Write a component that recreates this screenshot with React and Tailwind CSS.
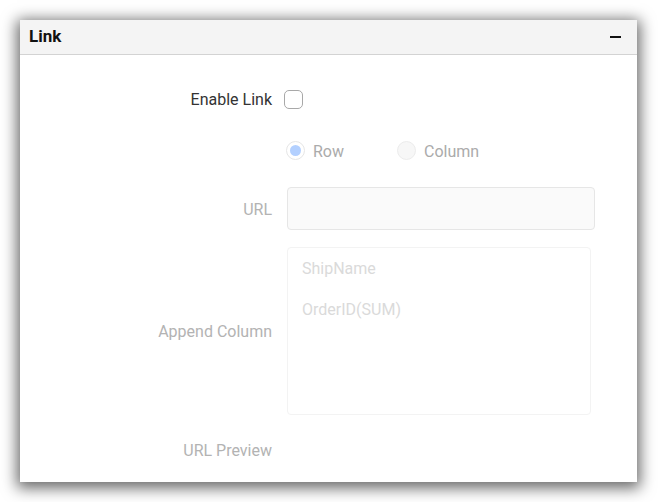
import React, { useState } from 'react';

const labelClass = 'w-[252px] shrink-0 text-right text-[16px] pt-[2px]';

const App = () => {
  const [enabled, setEnabled] = useState(false);
  const [mode, setMode] = useState('row');

  return (
    <div className="w-[658px] h-[502px] bg-white p-[20px] font-['Roboto',sans-serif]">
      <div className="w-[617px] h-[462px] bg-white flex flex-col shadow-[0_3px_14px_3px_rgba(0,0,0,0.6)]">
        {/* header */}
        <div className="h-[35px] shrink-0 flex items-center justify-between pl-[9px] pr-[16px] bg-[#f4f4f4] border-b border-[#d3d3d3]">
          <span className="text-[17px] font-bold text-[#111]">Link</span>
          <span className="block w-[11px] h-[2px] bg-[#111]"></span>
        </div>

        <div className="flex flex-col pt-[29px]">
          <div className="flex items-center h-[30px]">
            <div className={`${labelClass} text-[#333]`}>Enable Link</div>
            <div className="pl-[12px]">
              <button
                type="button"
                onClick={() => setEnabled(!enabled)}
                className="block w-[19px] h-[19px] rounded-[5px] border border-[#a8a8a8] bg-white"
              ></button>
            </div>
          </div>

          <div className="flex items-center h-[30px] mt-[21px]">
            <div className={labelClass}></div>
            <div className="pl-[14px] flex items-center">
              <label className="flex items-center cursor-default" onClick={() => setMode('row')}>
                <span className="w-[19px] h-[19px] rounded-full border border-[#e6e6e6] bg-white flex items-center justify-center">
                  {mode === 'row' && <span className="w-[11px] h-[11px] rounded-full bg-[#b3d0ff]"></span>}
                </span>
                <span className="ml-[8px] text-[16px] text-[#ababab] mt-[3px]">Row</span>
              </label>
              <label className="flex items-center ml-[53px] cursor-default" onClick={() => setMode('column')}>
                <span className="w-[19px] h-[19px] rounded-full border border-[#ececec] bg-[#f7f7f7] flex items-center justify-center">
                  {mode === 'column' && <span className="w-[11px] h-[11px] rounded-full bg-[#b3d0ff]"></span>}
                </span>
                <span className="ml-[8px] text-[16px] text-[#ababab] mt-[3px]">Column</span>
              </label>
            </div>
          </div>

          <div className="flex items-center h-[43px] mt-[22px]">
            <div className={`${labelClass} text-[#b3b3b3]`}>URL</div>
            <div className="pl-[15px]">
              <div className="w-[308px] h-[43px] rounded-[4px] border border-[#e6e6e6] bg-[#fafafa]"></div>
            </div>
          </div>

          <div className="flex items-center h-[168px] mt-[17px]">
            <div className={`${labelClass} text-[#b3b3b3]`}>Append Column</div>
            <div className="pl-[15px]">
              <div className="w-[304px] h-[168px] rounded-[4px] border border-[#f3f3f3] bg-white pl-[14px] pt-[10px] text-[16px] text-[#dadada]">
                <div className="h-[21px] leading-[21px]">ShipName</div>
                <div className="h-[21px] leading-[21px] mt-[20px]">OrderID(SUM)</div>
              </div>
            </div>
          </div>

          <div className="flex items-center h-[20px] mt-[25px]">
            <div className={`${labelClass} text-[#b3b3b3]`}>URL Preview</div>
          </div>
        </div>
      </div>
    </div>
  );
};

export default App;
